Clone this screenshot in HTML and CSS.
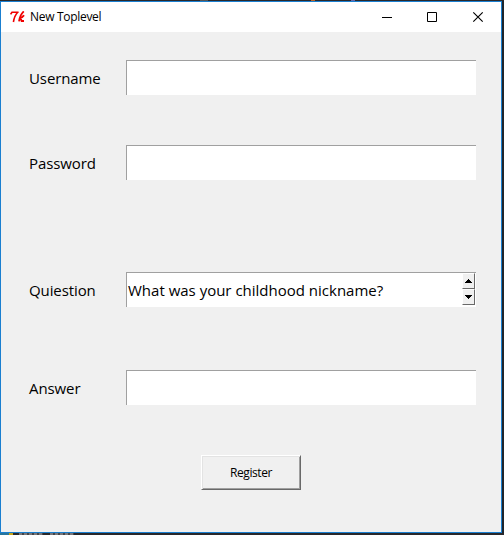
FILE: index.html
```html
<!DOCTYPE html>
<html lang="en">
<head>
<meta charset="utf-8">
<title>New Toplevel</title>
<link rel="stylesheet" href="styles.css">
</head>
<body>
<div class="strip"><i class="fleck gray"></i><i class="fleck orange"></i><i class="fleck violet"></i></div>
<main class="window">
  <header class="titlebar">
    <svg class="logo" width="16" height="12" viewBox="0 0 16 12" fill="none" stroke="#f00000" stroke-width="1.6"><path d="M.6 3.4 2 1.3H8.6M7.7 1.3C5.5 3.5 4.2 6.5 3.4 11"/><path d="M13.8 .4C11.3 2.5 9.7 6 9 10.4M9.2 7.6C11 7 13 5.8 14 4.2M10.5 6.8 11.6 10H14" stroke-width="1.8"/></svg>
    <h1 class="title">New Toplevel</h1>
    <svg class="controls" width="103" height="12" viewBox="0 0 103 12" fill="none" stroke="#000"><path d="M0 6.5H10M45.5 1.5h9v9h-9z"/><path d="M91.3 1.3l9.4 9.4m0-9.4-9.4 9.4" stroke-width="1.15"/></svg>
  </header>
  <form class="form">
    <div class="row"><label class="label user" for="u">Username</label><input class="entry" id="u"></div>
    <div class="row"><label class="label pass" for="p">Password</label><input class="entry" id="p"></div>
    <div class="row question"><span class="label ques">Quiestion</span>
      <div class="entry spinbox"><span class="value">What was your childhood nickname?</span>
        <div class="arrows">
          <span class="arrow"><svg width="7" height="4" viewBox="0 0 7 4" shape-rendering="crispEdges"><path d="M3 0h1v1h1v1h1v1h1v1H0V3h1V2h1V1h1z"/></svg></span>
          <span class="arrow"><svg width="7" height="4" viewBox="0 0 7 4" shape-rendering="crispEdges"><path d="M0 0h7v1H6v1H5v1H4v1H3V3H2V2H1V1H0z"/></svg></span>
        </div>
      </div>
    </div>
    <div class="row answer"><label class="label ans" for="a">Answer</label><input class="entry" id="a"></div>
    <button class="register" type="button"><span>Register</span></button>
  </form>
</main>
<footer class="strip bottom"><i class="fleck teal"></i><i class="fleck yellow"></i><i class="fleck words"></i><i class="fleck words"></i></footer>
</body>
</html>
```

FILE: styles.css
```css
* { box-sizing: border-box; }
body {
  margin: 0;
  width: 504px;
  height: 535px;
  overflow: hidden;
  background: #1f252b;
  color: #000;
  font-family: "Open Sans", "Noto Sans", sans-serif;
}
.strip { display: flex; height: 1px; background: #29282b; }
.fleck { height: 100%; }
.gray { width: 8px; margin-left: 200px; background: #555; }
.orange { width: 4px; margin-left: 103px; background: #b76527; }
.violet { width: 4px; margin-left: 36px; background: #6767a8; }
.window {
  width: 502px;
  height: 532px;
  border: 1px solid #1a7fd0;
  background: #f0f0f0;
}
.titlebar {
  display: flex;
  align-items: center;
  height: 30px;
  padding: 0 16px 0 9px;
  background: #fff;
}
.title {
  margin: 0 auto 0 4px;
  font-size: 12px;
  font-weight: 400;
  line-height: 16px;
  letter-spacing: -.3px;
}
.form { padding: 28px 25px 0 28px; }
.row { display: flex; height: 35px; margin-bottom: 50px; }
.question { margin-top: 92px; margin-bottom: 63px; }
.label {
  width: 97px;
  font-size: 15px;
  line-height: 36px;
  letter-spacing: -.1px;
  white-space: nowrap;
}
.entry {
  width: 350px;
  height: 35px;
  padding: 0;
  border: 0 solid #a0a0a0;
  border-width: 1px 0 0 1px;
  border-radius: 0;
  background: #fff;
  outline: 0;
}
.spinbox { display: flex; justify-content: space-between; padding: 0 1px; }
.value { font-size: 15px; line-height: 35px; white-space: nowrap; }
.arrows { width: 13px; }
.arrow {
  display: flex;
  align-items: center;
  justify-content: center;
  height: 16px;
  border: 1px solid #696969;
  border-color: #fff #696969 #696969 #fff;
  background: #f0f0f0;
}
.register {
  display: block;
  width: 100px;
  height: 35px;
  margin: 0 0 0 172px;
  padding: 0;
  border: 1px solid;
  border-color: #fff #696969 #696969 #fff;
  box-shadow: inset 1px 1px #e3e3e3, inset -1px -1px #a0a0a0;
  border-radius: 0;
  background: #f0f0f0;
  color: #000;
  font: 12px/33px "Open Sans", "Noto Sans", sans-serif;
  letter-spacing: -.4px;
}
.bottom { height: 2px; }
.teal { width: 9px; background: #28759c; }
.yellow { width: 4px; background: #c8a51a; }
.words {
  width: 24px;
  margin-left: 6px;
  background: repeating-linear-gradient(90deg, #77777b 0 3px, #454548 3px 5px);
}
.words + .words { margin-left: 7px; }
```
